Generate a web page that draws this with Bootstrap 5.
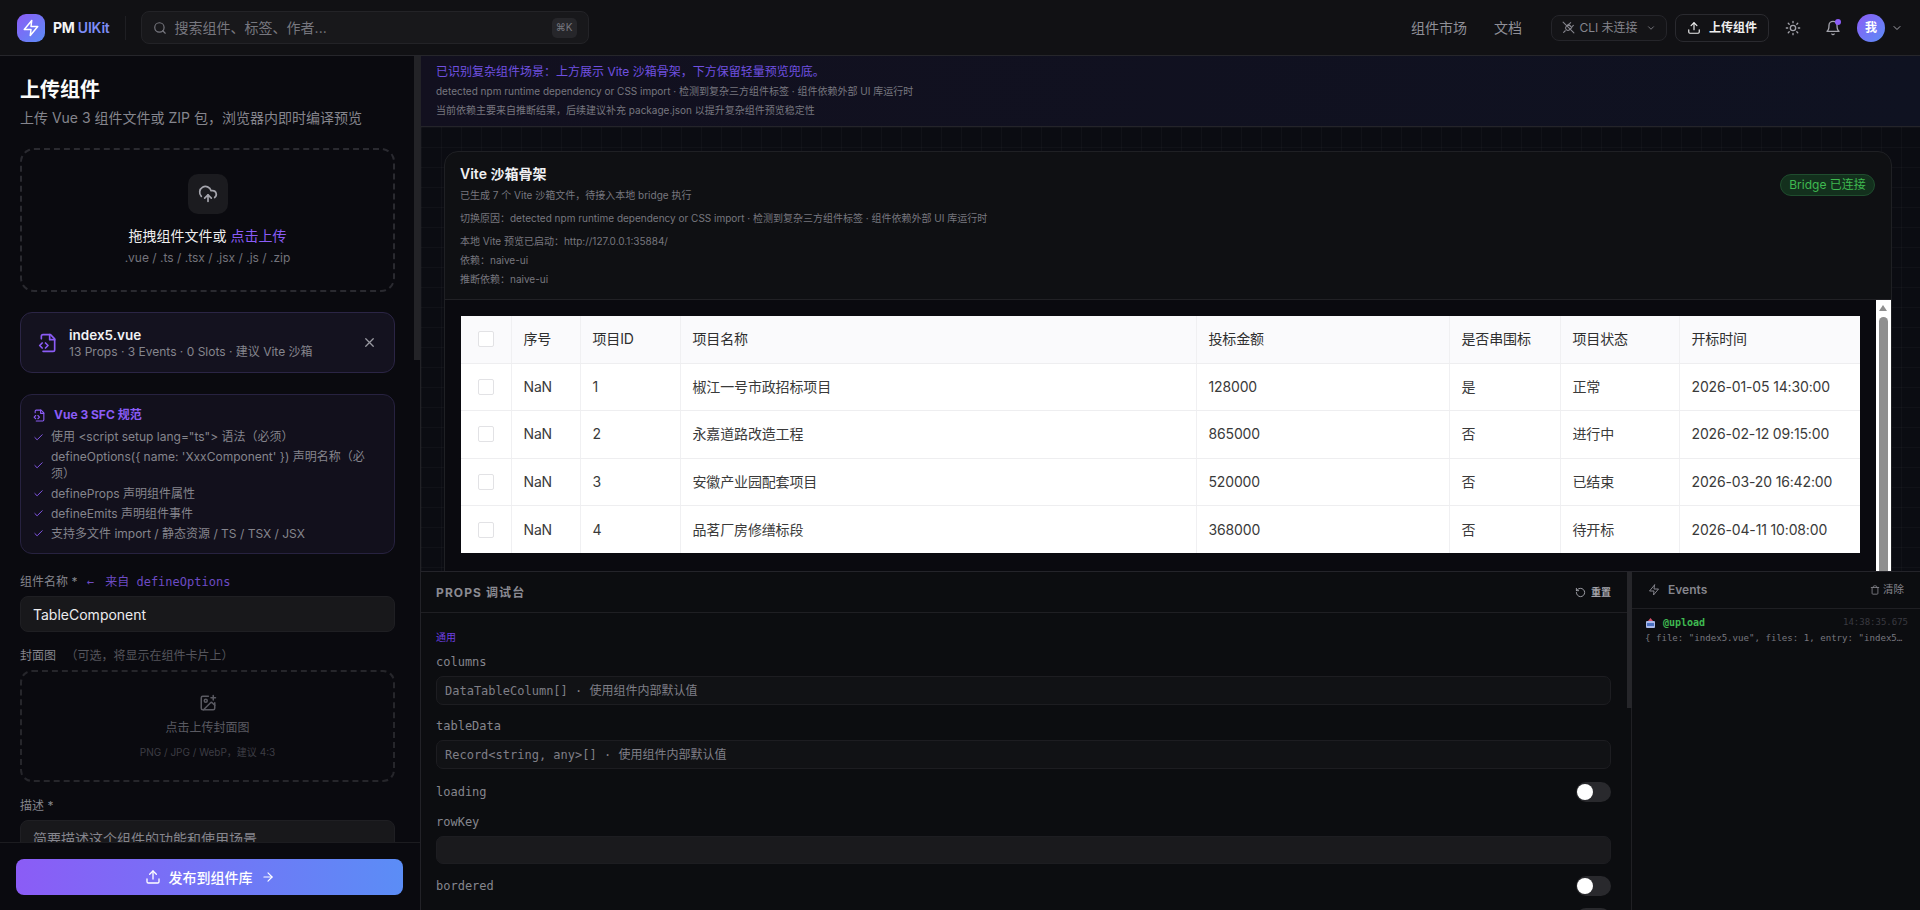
<!DOCTYPE html>
<html lang="zh-CN">
<head>
<meta charset="utf-8">
<title>PM UIKit</title>
<link href="https://cdn.jsdelivr.net/npm/bootstrap@5.3.0/dist/css/bootstrap.min.css" rel="stylesheet">
<style>
:root{--sans:Inter,"Noto Sans CJK SC",sans-serif;--mono:"DejaVu Sans Mono","Noto Sans CJK SC",monospace;--vio:#8b5cf6;--line:rgba(255,255,255,.08)}
html,body{height:910px;overflow:hidden}
body{background:#0a0a0f;color:#e8e8ea;font-family:var(--sans);font-size:13px}
svg.ic{fill:none;stroke:currentColor;stroke-width:2;stroke-linecap:round;stroke-linejoin:round;flex:none}
.topbar{height:56px;background:#111114;border-bottom:1px solid #26262b;padding:0 17px 0 17px}
.logo-box{width:28px;height:28px;border-radius:9px;background:linear-gradient(135deg,#8b5cf6,#5b8df6);color:#fff}
.brand-name{font-size:14px;font-weight:700;color:#f4f4f5;letter-spacing:-.2px}
.brand-name span{color:#7d8df6;font-weight:600}
.sepv{width:1px;height:24px;background:#1f1f23;margin:0 15px 0 15px}
.searchbox{width:448px;height:33px;background:#18181b;border:1px solid #232327;border-radius:8px;padding:0 11px 0 11px;color:#77777f;font-size:14px}
.kbdbox{background:#26262a;border-radius:5px;width:25px;height:20px;font-size:10px;color:#77777f}
.navlink{color:#8f8f97;font-size:14px}
.nav-second{margin-left:27px}
.cli-pill{width:116px;height:26px;border:1px solid #25252a;border-radius:8px;background:#141417;color:#85858d;font-size:12px;margin-left:29px}
.up-pill{width:94px;height:28px;border:1px solid #2a2a2f;border-radius:8px;background:#121215;color:#eee;font-size:12px;font-weight:600;margin-left:8px}
.iconbtn{color:#a3a3ab}
.sun-btn{margin-left:16px}
.bell-btn{margin-left:24px}
.dotmark{width:6px;height:6px;border-radius:50%;background:var(--vio);top:-1px;right:0}
.avatar{width:28px;height:28px;border-radius:50%;background:linear-gradient(135deg,#8b5cf6,#5b8df6);color:#fff;font-size:12px;font-weight:700;margin-left:16px}
.chev-btn{margin-left:6px}
.workspace{height:854px}
.sidebar{width:421px;flex:none;background:#0a0a0f;border-right:1px solid #222227}
.sidebar-inner{padding:20px 25px 0 20px;overflow:hidden;flex:1;min-height:0}
.fake-thumb{right:0;top:0;width:6px;height:304px;background:#232327}
.h-title{font-size:20px;line-height:28px;font-weight:700;color:#fafafa;margin:0}
.h-sub{font-size:14px;line-height:20px;color:#85858d;margin:4px 0 20px}
.dropz{height:144px;border:2px dashed #2a2a30;border-radius:14px}
.cloudbox{width:40px;height:40px;border-radius:10px;background:#1b1b1f;color:#a5a5ad;margin-top:24px}
.dz-main{font-size:14px;line-height:18px;color:#eee;margin-top:13px}
.dz-main span{color:var(--vio)}
.dz-ext{font-size:12px;line-height:16px;color:#74747c;margin-top:5px}
.filecard{height:61px;margin-top:20px;border:1px solid #2b2545;background:#14121f;border-radius:12px;padding:0 17px}
.file-txt{margin-left:-5px}
.fname{font-size:13.5px;line-height:18px;font-weight:600;color:#f1f1f3}
.fmeta{font-size:12px;line-height:16px;color:#85858d}
.vio{color:var(--vio)}
.xbtn{color:#9a9aa2}
.specbox{height:160px;margin-top:21px;border:1px solid #272240;background:#12101c;border-radius:12px;padding:12px 12px 0}
.spec-t{font-size:12px;line-height:16px;font-weight:700;color:var(--vio)}
.spec-l{font-size:12px;line-height:16.5px;color:#85858d}
.spec-i{margin:0;padding:6px 0 0;list-style:none}
.spec-i li{margin-bottom:3.5px;gap:7px}
.flabel{font-size:12px;line-height:16px;color:#85858d}
.flabel em{font-style:normal;color:#55555c;margin-left:6px}
.flabel .arrowt{font-family:var(--mono);color:#6d4bc4;margin-left:6px}
.flabel .arrowg{margin-right:4px}
.finput.form-control{height:36px;background:#18181b;border:1px solid #1f1f23;border-radius:8px;color:#ececef;font-size:14px;padding:0 12px;box-shadow:none;margin-top:6px}
.finput.form-control::placeholder{color:#85858d}
.coverz{height:112px;margin-top:6px;border:2px dashed #26262b;border-radius:12px;color:#5a5a62}
.cv-a{font-size:12px;line-height:16px;margin-top:8px}
.cv-b{font-size:10px;line-height:14px;color:#3d3d44;margin-top:9px}
.pubwrap{height:68px;flex:none;background:#0a0a0f;border-top:1px solid #1c1c20;padding:16px 16px 0;margin-right:0}
.pubbtn.btn{width:387px;height:36px;border:0;border-radius:8px;background:linear-gradient(90deg,#8b5cf6,#5b8df6);color:#fff;font-size:14px;font-weight:500}
.mainpane{min-width:0}
.infobar{height:71px;flex:none;background:linear-gradient(90deg,#12101f,#0f1221);border-bottom:1px solid #24242a;padding:8px 15px 0}
.i-1{font-size:12px;line-height:16px;color:#7050e0}
.i-2{font-size:10px;line-height:16px;color:#77777f;margin-top:3px}
.stage{flex:1;min-height:0;overflow:hidden;background-color:#0b0c12;background-image:linear-gradient(rgba(255,255,255,.025) 1px,transparent 1px),linear-gradient(90deg,rgba(255,255,255,.025) 1px,transparent 1px);background-size:20px 20px;padding:24px 28px 0 23px}
.sandbox{background:#0f1013;border:1px solid #1f2024;border-radius:14px 14px 0 0;overflow:hidden;height:500px}
.sb-head{height:148px;padding:12px 13px 0 15px;border-bottom:1px solid #212125}
.sb-title{font-size:14px;line-height:20px;font-weight:600;color:#f0f0f2}
.sb-t{font-size:10px;line-height:16px;color:#77777f;margin-top:3px}
.sb-t.wide{margin-top:7px}
.bridge{width:95px;height:22px;border:1px solid #1f4d2e;background:#13301d;color:#3fb950;font-size:12px;border-radius:11px;margin-top:10px;margin-right:3px}
.sb-body{background:#0a0a0f;height:271px}
.tablepad{padding:16px 16px 0}
.pm-table.table{width:1399px;table-layout:fixed;margin:0;background:#fff;--bs-table-bg:#fff;--bs-table-color:#333;border-color:#eeeef0;font-size:14px;letter-spacing:-.15px}
.pm-table th,.pm-table td{height:47.5px;padding:0 12px 1px;vertical-align:middle;border-bottom:1px solid #eeeef0;border-right:1px solid #f0f0f2;color:#3a3a3a;font-weight:400;white-space:nowrap}
.pm-table thead th{height:47px;background:#fafafc;color:#2f2f2f}
.pm-table tr:last-child td{border-bottom:0}
.pm-table th:last-child,.pm-table td:last-child{border-right:0}
.pm-table .c0{width:50px;padding:0 0 0 17px}.c1{width:69px}.c2{width:100px}.c3{width:516px}.c4{width:253px}.c5{width:111px}.c6{width:119px}.c7{width:181px}
.tickb{display:block;width:16px;height:16px;border:1px solid #e2e2e5;border-radius:2px;background:#fff}
.sc-track{width:15px;flex:none;background:#fff;padding:5px 3px 0}
.sc-up{width:0;height:0;border-left:4.5px solid transparent;border-right:4.5px solid transparent;border-bottom:6px solid #8f8f8f;display:block}
.sc-thumb{display:block;height:260px;background:#8f8f8f;border-radius:5px;margin-top:6px}
.dock{height:339px;flex:none;background:#0c0d10;border-top:1px solid #24242a}
.propsp{width:1211px;flex:none;border-right:1px solid #202024}
.p-head{height:41px;border-bottom:1px solid #1f1f23;padding:1px 20px 0 15px}
.p-title{font-family:var(--sans);font-size:12px;font-weight:700;color:#8a8a92;letter-spacing:1.1px}
.p-reset{font-size:10px;font-weight:600;color:#a5a5ad;gap:5px}
.p-body{padding:17px 20px 0 15px;overflow:hidden;height:298px}
.p-group{font-size:10px;line-height:14px;color:#6d3fe0}
.p-k{font-family:var(--mono);font-size:12px;line-height:16px;color:#85858d}
.p-box{height:29px;background:#111215;border:1px solid #1d1d21;border-radius:7px;margin-top:6px;padding:0 8px;font-family:var(--mono);font-size:12px;color:#7f7f87;line-height:28px}
.p-box.blank{height:28px;background:#1a1a1d}
.gap-a{margin-top:10px}.gap-b{margin-top:13px}.gap-c{margin-top:12px}
.pm-tog{width:35px;height:20px;border-radius:10px;background:#29292d;display:block;position:relative;flex:none}
.pm-tog::after{content:"";position:absolute;left:1px;top:2px;width:16px;height:16px;border-radius:50%;background:#fff}
.p-row{height:20px}
.props-thumb{right:-1px;top:0;width:5px;height:136px;background:#26262a}
.evp{min-width:0;background:#0c0d10}
.e-head{height:37px;border-bottom:1px solid #1f1f23;padding:0 16px 0 16px}
.e-title{font-size:12px;font-weight:600;color:#85858d}
.e-clear{font-size:10.5px;color:#85858d;gap:3px}
.e-row{padding:7px 12px 0 14px}
.e-name{font-family:var(--mono);font-size:10px;color:#3fb950;font-weight:700;line-height:14px}
.e-time{font-family:var(--mono);font-size:9px;color:#3a3a40}
.e-data{font-family:var(--mono);font-size:9.1px;color:#77777f;line-height:14px;margin:1px 0 0 -1px;white-space:nowrap}
</style>
</head>
<body>
<header class="topbar d-flex align-items-center">
  <div class="logo-box d-flex align-items-center justify-content-center"><svg class="ic" width="18" height="18" viewBox="0 0 24 24"><path d="M13 2 3 14h9l-1 8 10-12h-9l1-8z"/></svg></div>
  <div class="brand-name ms-2">PM <span>UIKit</span></div>
  <div class="sepv"></div>
  <div class="searchbox d-flex align-items-center">
    <svg class="ic me-2" width="14" height="14" viewBox="0 0 24 24"><circle cx="11" cy="11" r="8"/><path d="m21 21-4.3-4.3"/></svg>
    <span class="flex-grow-1">搜索组件、标签、作者...</span>
    <span class="kbdbox d-flex align-items-center justify-content-center">⌘K</span>
  </div>
  <div class="ms-auto d-flex align-items-center">
    <span class="navlink">组件市场</span>
    <span class="navlink nav-second">文档</span>
    <span class="cli-pill d-flex align-items-center justify-content-center gap-1">
      <svg class="ic" width="13" height="13" viewBox="0 0 24 24"><path d="m2 2 20 20"/><path d="M12 6 8 10a4 4 0 0 0 0 6 4 4 0 0 0 6 0l4-4z"/><path d="m6 18-3 3"/><path d="m16 3-2 2"/><path d="m21 8-2 2"/></svg>
      CLI 未连接
      <svg class="ic ms-1" width="10" height="10" viewBox="0 0 24 24"><path d="m6 9 6 6 6-6"/></svg>
    </span>
    <span class="up-pill d-flex align-items-center justify-content-center gap-2">
      <svg class="ic" width="14" height="14" viewBox="0 0 24 24"><path d="M21 15v4a2 2 0 0 1-2 2H5a2 2 0 0 1-2-2v-4"/><path d="m17 8-5-5-5 5"/><path d="M12 3v12"/></svg>
      上传组件
    </span>
    <svg class="ic iconbtn sun-btn" width="16" height="16" viewBox="0 0 24 24"><circle cx="12" cy="12" r="4"/><path d="M12 2v2M12 20v2M4.9 4.9l1.4 1.4M17.7 17.7l1.4 1.4M2 12h2M20 12h2M6.3 17.7l-1.4 1.4M19.1 4.9l-1.4 1.4"/></svg>
    <span class="position-relative iconbtn d-flex bell-btn">
      <svg class="ic" width="16" height="16" viewBox="0 0 24 24"><path d="M6 8a6 6 0 0 1 12 0c0 7 3 9 3 9H3s3-2 3-9"/><path d="M10.3 21a1.9 1.9 0 0 0 3.4 0"/></svg>
      <span class="dotmark position-absolute"></span>
    </span>
    <span class="avatar d-flex align-items-center justify-content-center">我</span>
    <svg class="ic iconbtn chev-btn" width="12" height="12" viewBox="0 0 24 24"><path d="m6 9 6 6 6-6"/></svg>
  </div>
</header>
<div class="workspace d-flex">
  <aside class="sidebar d-flex flex-column position-relative">
    <div class="sidebar-inner">
      <h1 class="h-title">上传组件</h1>
      <p class="h-sub">上传 Vue 3 组件文件或 ZIP 包，浏览器内即时编译预览</p>
      <div class="dropz d-flex flex-column align-items-center">
        <div class="cloudbox d-flex align-items-center justify-content-center"><svg class="ic" width="20" height="20" viewBox="0 0 24 24"><path d="M12 13v8"/><path d="M4 14.9A7 7 0 1 1 15.7 8h1.8a4.5 4.5 0 0 1 2.5 8.2"/><path d="m8 17 4-4 4 4"/></svg></div>
        <div class="dz-main">拖拽组件文件或 <span>点击上传</span></div>
        <div class="dz-ext">.vue / .ts / .tsx / .jsx / .js / .zip</div>
      </div>
      <div class="filecard d-flex align-items-center gap-3">
        <svg class="ic vio" width="20" height="20" viewBox="0 0 24 24"><path d="M4 7V4a2 2 0 0 1 2-2h9l5 5v13a2 2 0 0 1-2 2H6"/><path d="M14 2v6h6"/><path d="m5 12-3 3 3 3"/><path d="m9 18 3-3-3-3"/></svg>
        <div class="flex-grow-1 file-txt">
          <div class="fname">index5.vue</div>
          <div class="fmeta">13 Props · 3 Events · 0 Slots · 建议 Vite 沙箱</div>
        </div>
        <svg class="ic xbtn" width="15" height="15" viewBox="0 0 24 24"><path d="M18 6 6 18M6 6l12 12"/></svg>
      </div>
      <div class="specbox">
        <div class="spec-t d-flex align-items-center gap-2"><svg class="ic" width="13" height="13" viewBox="0 0 24 24"><path d="M4 7V4a2 2 0 0 1 2-2h9l5 5v13a2 2 0 0 1-2 2H6"/><path d="M14 2v6h6"/><path d="m5 12-3 3 3 3"/><path d="m9 18 3-3-3-3"/></svg>Vue 3 SFC 规范</div>
        <ul class="spec-i">
          <li class="spec-l d-flex align-items-center"><svg class="ic vio" width="11" height="11" viewBox="0 0 24 24"><path d="M20 6 9 17l-5-5"/></svg><span>使用 &lt;script setup lang="ts"&gt; 语法（必须）</span></li>
          <li class="spec-l d-flex align-items-center"><svg class="ic vio" width="11" height="11" viewBox="0 0 24 24"><path d="M20 6 9 17l-5-5"/></svg><span>defineOptions({ name: 'XxxComponent' }) 声明名称（必须）</span></li>
          <li class="spec-l d-flex align-items-center"><svg class="ic vio" width="11" height="11" viewBox="0 0 24 24"><path d="M20 6 9 17l-5-5"/></svg><span>defineProps 声明组件属性</span></li>
          <li class="spec-l d-flex align-items-center"><svg class="ic vio" width="11" height="11" viewBox="0 0 24 24"><path d="M20 6 9 17l-5-5"/></svg><span>defineEmits 声明组件事件</span></li>
          <li class="spec-l d-flex align-items-center"><svg class="ic vio" width="11" height="11" viewBox="0 0 24 24"><path d="M20 6 9 17l-5-5"/></svg><span>支持多文件 import / 静态资源 / TS / TSX / JSX</span></li>
        </ul>
      </div>
      <div class="flabel mt-3 pt-1">组件名称 * <span class="arrowt"><span class="arrowg">←</span> 来自 defineOptions</span></div>
      <input class="finput form-control" type="text" value="TableComponent">
      <div class="flabel mt-3">封面图 <em>（可选，将显示在组件卡片上）</em></div>
      <div class="coverz d-flex flex-column align-items-center justify-content-center">
        <svg class="ic" width="18" height="18" viewBox="0 0 24 24"><path d="M16 5h6"/><path d="M19 2v6"/><path d="M21 11.5V19a2 2 0 0 1-2 2H5a2 2 0 0 1-2-2V5a2 2 0 0 1 2-2h7.5"/><path d="m21 15-3.1-3.1a2 2 0 0 0-2.8 0L6 21"/><circle cx="9" cy="9" r="2"/></svg>
        <div class="cv-a">点击上传封面图</div>
        <div class="cv-b">PNG / JPG / WebP，建议 4:3</div>
      </div>
      <div class="flabel mt-3">描述 *</div>
      <input class="finput form-control" type="text" placeholder="简要描述这个组件的功能和使用场景">
    </div>
    <div class="fake-thumb position-absolute"></div>
    <div class="pubwrap">
      <button class="pubbtn btn d-flex align-items-center justify-content-center gap-2" type="button">
        <svg class="ic" width="16" height="16" viewBox="0 0 24 24"><path d="M21 15v4a2 2 0 0 1-2 2H5a2 2 0 0 1-2-2v-4"/><path d="m17 8-5-5-5 5"/><path d="M12 3v12"/></svg>
        发布到组件库
        <svg class="ic" width="14" height="14" viewBox="0 0 24 24"><path d="M5 12h14"/><path d="m12 5 7 7-7 7"/></svg>
      </button>
    </div>
  </aside>
  <main class="mainpane flex-grow-1 d-flex flex-column">
    <div class="infobar">
      <div class="i-1">已识别复杂组件场景：上方展示 Vite 沙箱骨架，下方保留轻量预览兜底。</div>
      <div class="i-2">detected npm runtime dependency or CSS import · 检测到复杂三方组件标签 · 组件依赖外部 UI 库运行时</div>
      <div class="i-2">当前依赖主要来自推断结果，后续建议补充 package.json 以提升复杂组件预览稳定性</div>
    </div>
    <div class="stage">
      <div class="sandbox">
        <div class="sb-head d-flex justify-content-between">
          <div>
            <div class="sb-title">Vite 沙箱骨架</div>
            <div class="sb-t">已生成 7 个 Vite 沙箱文件，待接入本地 bridge 执行</div>
            <div class="sb-t wide">切换原因：detected npm runtime dependency or CSS import · 检测到复杂三方组件标签 · 组件依赖外部 UI 库运行时</div>
            <div class="sb-t wide">本地 Vite 预览已启动：http://127.0.0.1:35884/</div>
            <div class="sb-t">依赖：naive-ui</div>
            <div class="sb-t">推断依赖：naive-ui</div>
          </div>
          <span class="bridge d-flex align-items-center justify-content-center">Bridge 已连接</span>
        </div>
        <div class="sb-body d-flex">
          <div class="flex-grow-1 tablepad">
            <table class="pm-table table">
              <thead><tr><th class="c0"><span class="tickb"></span></th><th class="c1">序号</th><th class="c2">项目ID</th><th class="c3">项目名称</th><th class="c4">投标金额</th><th class="c5">是否串围标</th><th class="c6">项目状态</th><th class="c7">开标时间</th></tr></thead>
              <tbody>
                <tr><td class="c0"><span class="tickb"></span></td><td>NaN</td><td>1</td><td>椒江一号市政招标项目</td><td>128000</td><td>是</td><td>正常</td><td>2026-01-05 14:30:00</td></tr>
                <tr><td class="c0"><span class="tickb"></span></td><td>NaN</td><td>2</td><td>永嘉道路改造工程</td><td>865000</td><td>否</td><td>进行中</td><td>2026-02-12 09:15:00</td></tr>
                <tr><td class="c0"><span class="tickb"></span></td><td>NaN</td><td>3</td><td>安徽产业园配套项目</td><td>520000</td><td>否</td><td>已结束</td><td>2026-03-20 16:42:00</td></tr>
                <tr><td class="c0"><span class="tickb"></span></td><td>NaN</td><td>4</td><td>品茗厂房修缮标段</td><td>368000</td><td>否</td><td>待开标</td><td>2026-04-11 10:08:00</td></tr>
              </tbody>
            </table>
          </div>
          <div class="sc-track"><span class="sc-up"></span><span class="sc-thumb"></span></div>
        </div>
      </div>
    </div>
    <div class="dock d-flex">
      <section class="propsp position-relative">
        <div class="p-head d-flex align-items-center justify-content-between">
          <span class="p-title">PROPS 调试台</span>
          <span class="p-reset d-flex align-items-center"><svg class="ic" width="11" height="11" viewBox="0 0 24 24"><path d="M3 12a9 9 0 1 0 9-9 9.7 9.7 0 0 0-6.7 2.7L3 8"/><path d="M3 3v5h5"/></svg>重置</span>
        </div>
        <div class="p-body">
          <div class="p-group">通用</div>
          <div class="p-k gap-a">columns</div>
          <div class="p-box">DataTableColumn[] · 使用组件内部默认值</div>
          <div class="p-k gap-b">tableData</div>
          <div class="p-box">Record&lt;string, any&gt;[] · 使用组件内部默认值</div>
          <div class="p-row d-flex align-items-center justify-content-between gap-b"><span class="p-k">loading</span><span class="pm-tog"></span></div>
          <div class="p-k gap-c">rowKey</div>
          <div class="p-box blank"></div>
          <div class="p-row d-flex align-items-center justify-content-between gap-c"><span class="p-k">bordered</span><span class="pm-tog"></span></div>
          <div class="p-row d-flex align-items-center justify-content-end gap-c"><span class="pm-tog"></span></div>
        </div>
        <div class="props-thumb position-absolute"></div>
      </section>
      <section class="evp flex-grow-1 d-flex flex-column">
        <div class="e-head d-flex align-items-center justify-content-between">
          <span class="e-title d-flex align-items-center gap-2"><svg class="ic" width="12" height="12" viewBox="0 0 24 24"><path d="M13 2 3 14h9l-1 8 10-12h-9l1-8z"/></svg>Events</span>
          <span class="e-clear d-flex align-items-center"><svg class="ic" width="10" height="10" viewBox="0 0 24 24"><path d="M3 6h18"/><path d="M19 6v14a2 2 0 0 1-2 2H7a2 2 0 0 1-2-2V6"/><path d="M8 6V4a2 2 0 0 1 2-2h4a2 2 0 0 1 2 2v2"/></svg>清除</span>
        </div>
        <div class="e-row">
          <div class="d-flex align-items-center justify-content-between">
            <span class="e-name d-flex align-items-center gap-2"><svg width="9" height="10" viewBox="0 0 9 10"><rect x="0" y="3" width="9" height="7" rx="1" fill="#a9b8e8"/><rect x="1" y="5" width="7" height="3" fill="#4a6fc0"/><path d="M4.5 0 7 3H2z" fill="#d8506a"/></svg>@upload</span>
            <span class="e-time">14:38:35.675</span>
          </div>
          <div class="e-data">{ file: "index5.vue", files: 1, entry: "index5…</div>
        </div>
      </section>
    </div>
  </main>
</div>
<script src="https://cdn.jsdelivr.net/npm/bootstrap@5.3.0/dist/js/bootstrap.bundle.min.js"></script>
</body>
</html>
